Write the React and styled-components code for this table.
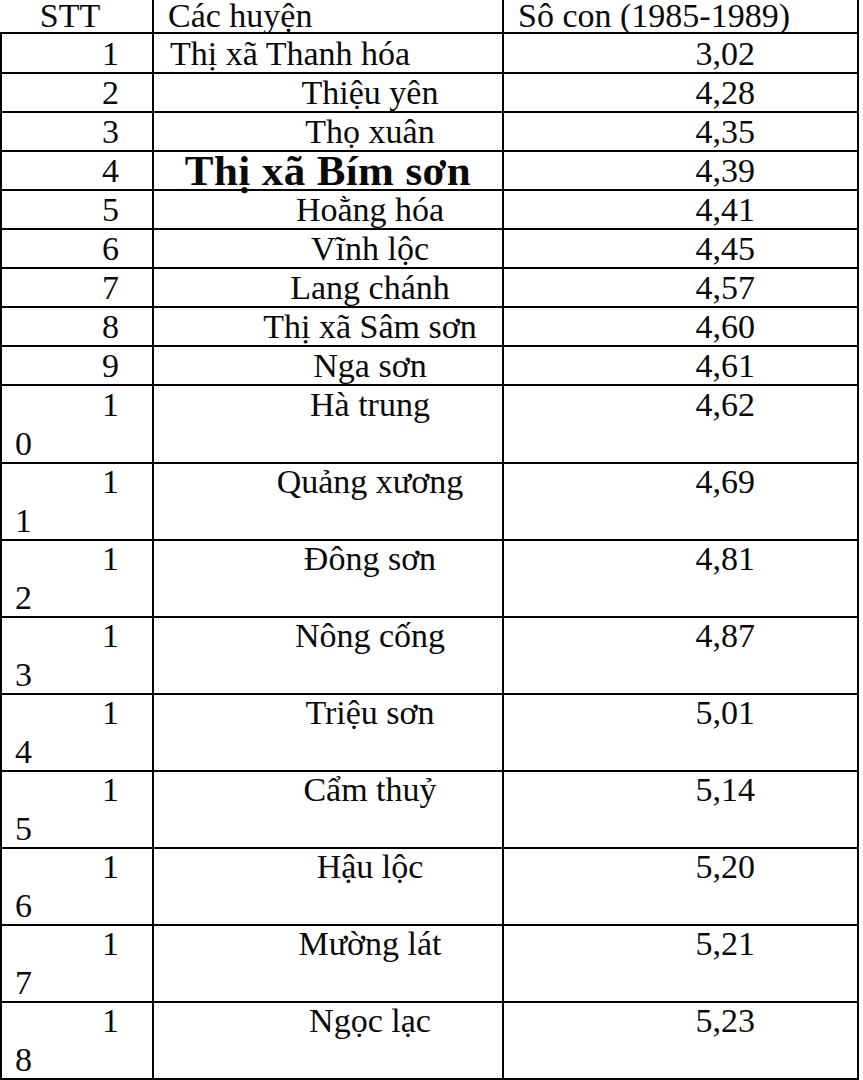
import React from "react";
import styled, { createGlobalStyle } from "styled-components";

const GlobalStyle = createGlobalStyle`
  html, body {
    margin: 0;
    padding: 0;
    background: #fff;
  }
  body {
    font-family: "Liberation Serif", "Times New Roman", serif;
    color: #0a0a0a;
    overflow: hidden;
  }
`;

const Sheet = styled.div`
  width: 859px;
  height: 1080px;
  overflow: hidden;
  background: #fff;
`;

const Row = styled.div`
  display: grid;
  grid-template-columns: 154px 350px 355px;
  height: ${(p) => p.$height}px;
`;

const Cell = styled.div`
  box-sizing: border-box;
  border-right: 2px solid #000;
  border-bottom: 2px solid #000;
  border-left: ${(p) => (p.$first ? "2px solid #000" : "none")};
  font-size: 34px;
  line-height: 37px;
  padding-top: 1px;
  white-space: nowrap;
  overflow: visible;
`;

const HeadCell = styled(Cell)`
  line-height: 32px;
  padding-top: 0;
  padding-left: ${(p) => p.$pl || 0}px;
  padding-right: ${(p) => p.$pr || 0}px;
  text-align: ${(p) => p.$align || "left"};
`;

const NumCell = styled(Cell)`
  display: flex;
  flex-direction: column;
`;

const NumLine = styled.span`
  display: block;
  text-align: ${(p) => (p.$left ? "left" : "right")};
  padding-right: ${(p) => (p.$left ? 0 : 33)}px;
  padding-left: ${(p) => (p.$left ? 13 : 0)}px;
  margin-top: ${(p) => (p.$left ? 2 : 0)}px;
`;

const NameCell = styled(Cell)`
  text-align: ${(p) => (p.$variant === "left" ? "left" : "center")};
  padding-left: ${(p) =>
    p.$variant === "left" ? 16 : p.$variant === "bold" ? 0 : 92}px;
  padding-right: ${(p) => (p.$variant === "center" ? 8 : 0)}px;
  font-weight: ${(p) => (p.$variant === "bold" ? 700 : 400)};
  font-size: ${(p) => (p.$variant === "bold" ? 43 : 34)}px;
  letter-spacing: ${(p) => (p.$variant === "bold" ? "0.4px" : "0")};
`;

const ValueCell = styled(Cell)`
  text-align: right;
  padding-right: 102px;
`;

const rows = [
  ["1", "Thị xã Thanh hóa", "3,02", "left"],
  ["2", "Thiệu yên", "4,28"],
  ["3", "Thọ xuân", "4,35"],
  ["4", "Thị xã Bím sơn", "4,39", "bold"],
  ["5", "Hoằng hóa", "4,41"],
  ["6", "Vĩnh lộc", "4,45"],
  ["7", "Lang chánh", "4,57"],
  ["8", "Thị xã Sâm sơn", "4,60"],
  ["9", "Nga sơn", "4,61"],
  ["10", "Hà trung", "4,62"],
  ["11", "Quảng xương", "4,69"],
  ["12", "Đông sơn", "4,81"],
  ["13", "Nông cống", "4,87"],
  ["14", "Triệu sơn", "5,01"],
  ["15", "Cẩm thuỷ", "5,14"],
  ["16", "Hậu lộc", "5,20"],
  ["17", "Mường lát", "5,21"],
  ["18", "Ngọc lạc", "5,23"],
];

const App = () => {
  return (
    <Sheet>
      <GlobalStyle />
      <Row $height={34}>
        <HeadCell $align="center" $pr={12}>STT</HeadCell>
        <HeadCell $pl={14}>Các huyện</HeadCell>
        <HeadCell $pl={14}>Sô con (1985-1989)</HeadCell>
      </Row>
      {rows.map(([stt, name, value, variant]) => {
        const tall = stt.length > 1;
        return (
          <Row key={stt} $height={tall ? 77 : 39}>
            <NumCell $first>
              <NumLine>{stt[0]}</NumLine>
              {tall && <NumLine $left>{stt.slice(1)}</NumLine>}
            </NumCell>
            <NameCell $variant={variant || "center"}>{name}</NameCell>
            <ValueCell>{value}</ValueCell>
          </Row>
        );
      })}
    </Sheet>
  );
};

export default App;
